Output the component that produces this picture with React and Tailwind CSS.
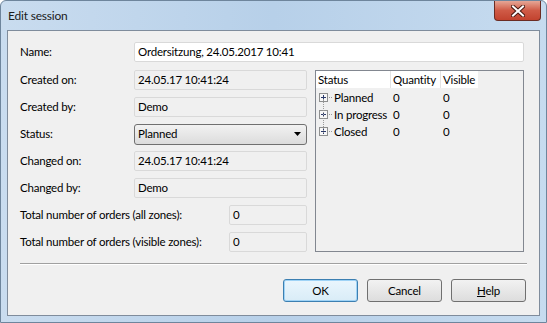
import React from 'react';

const font = { fontFamily: 'Lato, "Liberation Sans", Arial, sans-serif' };

function ReadOnly({ value, className = '' }) {
  return (
    <div className={`h-[20px] flex items-center pl-[3px] border border-[#d9d9d9] rounded-[2px] bg-[#f0f0f0] ${className}`}>
      {value}
    </div>
  );
}

function Row({ label, children }) {
  return (
    <div className="flex items-center h-[20px]">
      <div className="w-[114px] shrink-0">{label}</div>
      {children}
    </div>
  );
}

function PlusBox() {
  return (
    <svg width="9" height="9" viewBox="0 0 9 9" className="shrink-0">
      <rect x="0.5" y="0.5" width="8" height="8" fill="#f7f7f7" stroke="#8e8f8f" />
      <path d="M2 4.5h5M4.5 2v5" stroke="#2b3a6b" strokeWidth="1" />
    </svg>
  );
}

const treeRows = [
  { name: 'Planned', qty: '0', vis: '0' },
  { name: 'In progress', qty: '0', vis: '0' },
  { name: 'Closed', qty: '0', vis: '0' },
];

export default function App() {
  return (
    <div
      className="w-[547px] h-[323px] flex flex-col bg-gradient-to-r from-[#c9dcef] via-[#b7d0e9] to-[#c6dbef] border border-[#6e859c] rounded-t-[6px] text-[11.5px] tracking-[-0.2px] text-black overflow-hidden"
      style={font}
    >
      {/* title bar */}
      <div className="h-[29px] shrink-0 flex items-start">
        <div className="pl-[7px] pt-[6px] text-[12px] text-[#1b1b1b]">Edit session</div>
        <div className="ml-auto mr-[5px] w-[47px] h-[20px] rounded-b-[4px] border border-[#6b2c23] border-t-0 bg-gradient-to-b from-[#e5a696] via-[#cf5a46] to-[#c2432f] flex items-center justify-center">
          <svg width="14" height="12" viewBox="0 0 14 12">
            <path d="M2 1.5 L12 10.5 M12 1.5 L2 10.5" stroke="#4a1a12" strokeWidth="4" strokeLinecap="square" />
            <path d="M2 1.5 L12 10.5 M12 1.5 L2 10.5" stroke="#ffffff" strokeWidth="2" strokeLinecap="square" />
          </svg>
        </div>
      </div>

      {/* client area */}
      <div className="ml-[6px] w-[533px] h-[286px] shrink-0 bg-[#f0f0f0] border border-[#7f8c9c] flex flex-col px-[12px] pt-[11px]">
        <Row label="Name:">
          <div className="w-[390px] h-[20px] flex items-center pl-[3px] border border-[#d9d9d9] rounded-[2px] bg-white">
            Ordersitzung, 24.05.2017 10:41
          </div>
        </Row>

        <div className="flex mt-[8px]">
          <div className="w-[287px] flex flex-col gap-[7px]">
            <Row label="Created on:">
              <ReadOnly value="24.05.17 10:41:24" className="w-[173px]" />
            </Row>
            <Row label="Created by:">
              <ReadOnly value="Demo" className="w-[173px]" />
            </Row>
            <Row label="Status:">
              <div className="w-[173px] h-[21px] flex items-center pl-[3px] pr-[5px] border border-[#707070] rounded-[3px] bg-gradient-to-b from-[#f2f2f2] to-[#dcdcdc]">
                <span>Planned</span>
                <svg width="7" height="4" viewBox="0 0 7 4" className="ml-auto">
                  <path d="M0 0h7L3.5 4z" fill="#000" />
                </svg>
              </div>
            </Row>
            <Row label="Changed on:">
              <ReadOnly value="24.05.17 10:41:24" className="w-[173px]" />
            </Row>
            <Row label="Changed by:">
              <ReadOnly value="Demo" className="w-[173px]" />
            </Row>
            <div className="flex items-center h-[20px]">
              <div className="w-[209px] shrink-0">Total number of orders (all zones):</div>
              <ReadOnly value="0" className="w-[78px]" />
            </div>
            <div className="flex items-center h-[20px]">
              <div className="w-[209px] shrink-0">Total number of orders (visible zones):</div>
              <ReadOnly value="0" className="w-[78px]" />
            </div>
          </div>

          {/* tree list */}
          <div className="ml-[8px] w-[209px] h-[182px] border border-[#828790] bg-[#f0f0f0] flex flex-col">
            <div className="flex h-[17px] w-[162px] bg-white">
              <div className="w-[75px] pl-[2px] flex items-center border-r border-[#e3e3e3]">Status</div>
              <div className="w-[50px] pl-[2px] flex items-center border-r border-[#e3e3e3]">Quantity</div>
              <div className="w-[37px] pl-[2px] flex items-center">Visible</div>
            </div>
            <div className="relative flex flex-col pt-[1px]">
              <div className="absolute left-[7px] top-[11px] h-[34px] border-l border-dotted border-[#9a9a9a]" />
              {treeRows.map((r) => (
                <div key={r.name} className="flex items-center h-[17px]">
                  <div className="w-[75px] flex items-center pl-[3px]">
                    <PlusBox />
                    <span className="w-[3px] border-t border-dotted border-[#9a9a9a] mx-[1px]" />
                    <span className="ml-[1px] whitespace-nowrap">{r.name}</span>
                  </div>
                  <div className="w-[50px] pl-[2px]">{r.qty}</div>
                  <div className="w-[37px] pl-[2px]">{r.vis}</div>
                </div>
              ))}
            </div>
          </div>
        </div>

        {/* separator */}
        <div className="mt-[11px] w-[507px] border-t border-[#a0a0a0] border-b border-b-white" />

        {/* buttons */}
        <div className="mt-[14px] flex justify-end gap-[9px] pr-[1px]">
          <button className="w-[75px] h-[23px] rounded-[3px] border border-[#3c7fb1] bg-gradient-to-b from-[#eaf6fd] to-[#d9ecf7] shadow-[inset_0_0_0_1px_#9fd3f6]">
            OK
          </button>
          <button className="w-[75px] h-[23px] rounded-[3px] border border-[#707070] bg-gradient-to-b from-[#f2f2f2] to-[#dddddd]">
            Cancel
          </button>
          <button className="w-[75px] h-[23px] rounded-[3px] border border-[#707070] bg-gradient-to-b from-[#f2f2f2] to-[#dddddd]">
            <span className="underline">H</span>elp
          </button>
        </div>
      </div>
    </div>
  );
}
